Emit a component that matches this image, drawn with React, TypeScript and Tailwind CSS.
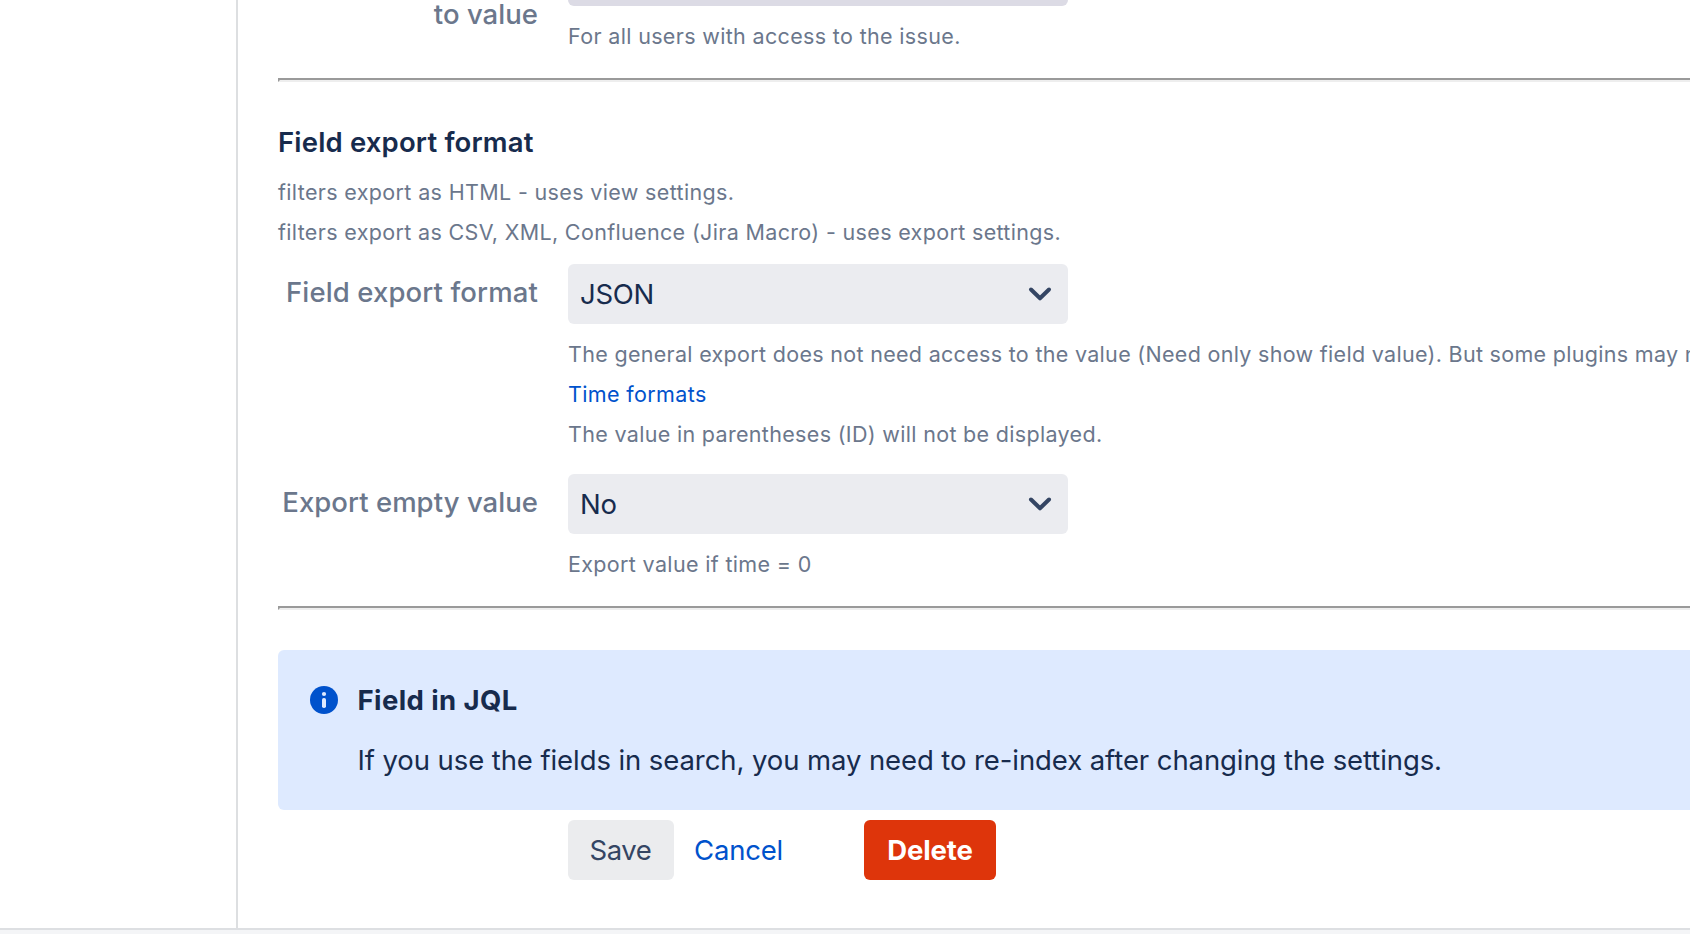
import type { ReactNode } from "react";

function Divider() {
  return (
    <hr className="-mr-1 h-1 border-2 border-t-[#9a9a9a] border-l-[#9a9a9a] border-r-[#eeeeee] border-b-[#eeeeee]" />
  );
}

function Select({ value, className }: { value: string; className: string }) {
  return (
    <div className="flex h-[60px] w-[500px] items-center justify-between rounded-md bg-[#ebecf0] pr-4 pl-3 text-[#172b4d]">
      <span className={className}>{value}</span>
      <svg width="24" height="24" viewBox="0 0 24 24" fill="none" stroke="#344563" strokeWidth="4" strokeLinecap="round" strokeLinejoin="round">
        <path d="M3 7.5l9 8.8 9-8.8" />
      </svg>
    </div>
  );
}

function Row({ label, labelClass, children }: { label: string; labelClass: string; children: ReactNode }) {
  return (
    <div className="flex gap-[30px]">
      <div className={`w-[260px] shrink-0 text-right whitespace-nowrap font-medium text-[#6b778c] ${labelClass}`}>{label}</div>
      <div className="min-w-0 flex-1">{children}</div>
    </div>
  );
}

function Help({ children, className }: { children: ReactNode; className: string }) {
  return <p className={`whitespace-nowrap text-[21.5px] text-[#6b778c] ${className}`}>{children}</p>;
}

export default function App() {
  return (
    <div className="flex h-[934px] w-full flex-col overflow-hidden bg-white font-['Inter',sans-serif] text-[27.5px] leading-[40px]">
      <div className="flex min-h-0 flex-1">
        <aside className="w-[238px] shrink-0 border-r-2 border-[#dddfe1]" />
        <main className="min-w-0 flex-1 overflow-hidden pl-10">
          <Row label="to value" labelClass="-mt-[6px] tracking-[0.04px]">
            <div className="h-[6px] w-[500px] rounded-b-md bg-[#dcdbe5]" />
            <Help className="mt-[10px] tracking-[0.34px]">For all users with access to the issue.</Help>
          </Row>
          <div className="mt-[22px]">
            <Divider />
          </div>

          <section className="mt-10">
            <h3 className="font-semibold tracking-[0.17px] text-[#172b4d]">Field export format</h3>
            <Help className="mt-[10px] tracking-[0.35px]">filters export as HTML - uses view settings.</Help>
            <Help className="tracking-[0.34px]">filters export as CSV, XML, Confluence (Jira Macro) - uses export settings.</Help>
            <div className="mt-3">
              <Row label="Field export format" labelClass="mt-2 tracking-[0.13px]">
                <Select value="JSON" className="tracking-[-0.29px]" />
                <Help className="mt-[10px] tracking-[0.306px]">
                  The general export does not need access to the value (Need only show field value). But some plugins may n
                </Help>
                <Help className="tracking-[0.37px]">
                  <a className="text-[#0052cc]">Time formats</a>
                </Help>
                <Help className="tracking-[0.32px]">The value in parentheses (ID) will not be displayed.</Help>
              </Row>
            </div>
            <div className="mt-5">
              <Row label="Export empty value" labelClass="mt-2 tracking-[0.05px]">
                <Select value="No" className="tracking-[-0.2px]" />
                <Help className="mt-[10px] tracking-[0.34px]">Export value if time = 0</Help>
              </Row>
            </div>
          </section>
          <div className="mt-[22px]">
            <Divider />
          </div>

          <div className="mt-10 flex h-40 gap-[19.5px] rounded-l-md bg-[#deeaff] py-[30px] pl-8 text-[#172b4d]">
            <svg className="mt-[6px] shrink-0" width="28" height="28" viewBox="0 0 28 28">
              <circle cx="14" cy="14" r="14" fill="#0052cc" />
              <circle cx="14" cy="8" r="2.1" fill="#deeaff" />
              <rect x="12" y="12" width="4" height="10" rx="1.8" fill="#deeaff" />
            </svg>
            <div className="whitespace-nowrap">
              <p className="font-bold tracking-[0.4px]">Field in JQL</p>
              <p className="mt-5 tracking-[-0.088px]">
                If you use the fields in search, you may need to re-index after changing the settings.
              </p>
            </div>
          </div>

          <div className="mt-[10px] flex h-[60px] items-center pl-[290px]">
            <button className="h-[60px] w-[106px] rounded-md bg-[#ebecee] pr-px tracking-[-0.45px] text-[#344563]">Save</button>
            <a className="ml-5 w-[90px] tracking-[-0.2px] text-[#0052cc]">Cancel</a>
            <button className="ml-20 h-[60px] w-[132px] rounded-md bg-[#de350b] font-bold tracking-[-0.1px] text-white">Delete</button>
          </div>
        </main>
      </div>
      <footer className="h-[6px] shrink-0 border-t-2 border-[#dddfe2] bg-[#f4f5f7]" />
    </div>
  );
}
